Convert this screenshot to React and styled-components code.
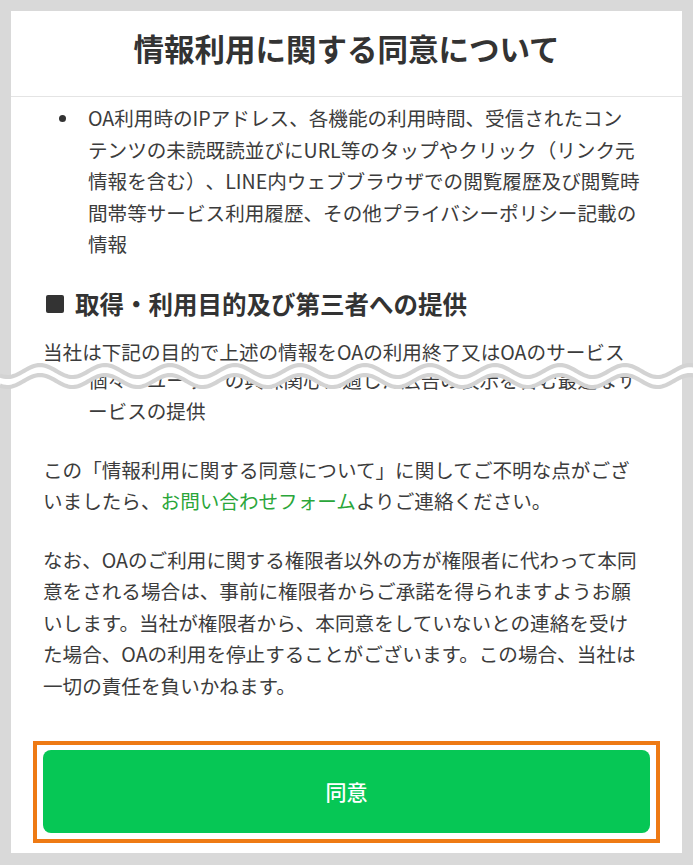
import React from 'react';
import styled, { createGlobalStyle } from 'styled-components';

const GlobalStyle = createGlobalStyle`
  body {
    margin: 0;
    background-color: #d9d9d9;
    font-family: 'Noto Sans CJK JP', 'Noto Sans', sans-serif;
  }
`;

// wavy "torn" splice between two screenshots
const WAVE_TOP = 362;
const WAVE_HEIGHT = 32;
const upper = (x) => 371 - 6 * Math.cos((2 * Math.PI * (x - 40)) / 65);
const lower = (x) => upper(x) + 10;

const curve = (fn, from, to, move = true) => {
  const pts = [];
  const step = from < to ? 2 : -2;
  for (let x = from; step > 0 ? x <= to : x >= to; x += step) {
    pts.push(`${x},${fn(x).toFixed(2)}`);
  }
  return (move ? 'M' : 'L') + pts.join(' L');
};

const Tear = () => {
  const cover = `M11,${WAVE_TOP} L682,${WAVE_TOP} ${curve(lower, 682, 11, false)} Z`;
  const band = `${curve(upper, 0, 694)} ${curve(lower, 694, 0, false)} Z`;
  return (
    <TearSvg viewBox={`0 ${WAVE_TOP} 693 ${WAVE_HEIGHT}`}>
      <path d={cover} fill="#ffffff" />
      <path d={band} fill="#ffffff" />
      <path d={curve(upper, 0, 694)} fill="none" stroke="#d3d3d3" strokeWidth="4.2" />
      <path d={curve(lower, 0, 694)} fill="none" stroke="#d3d3d3" strokeWidth="4.2" />
    </TearSvg>
  );
};

const App = () => {
  return (
    <>
      <GlobalStyle />
      <Page>
        <Card>
          <Header>
            <Title>情報利用に関する同意について</Title>
          </Header>
          <Body>
            <BulletList>
              <Item>
                OA利用時のIPアドレス、各機能の利用時間、受信されたコン
                <br />
                テンツの未読既読並びにURL等のタップやクリック（リンク元
                <br />
                情報を含む）、LINE内ウェブブラウザでの閲覧履歴及び閲覧時
                <br />
                間帯等サービス利用履歴、その他プライバシーポリシー記載の
                <br />
                情報
              </Item>
            </BulletList>

            <SectionTitle>取得・利用目的及び第三者への提供</SectionTitle>
            <Text>当社は下記の目的で上述の情報をOAの利用終了又はOAのサービス</Text>

            <BulletList $spliced>
              <Item>
                個々のユーザーの興味関心に適した広告の表示を含む最適なサ
                <br />
                ービスの提供
              </Item>
            </BulletList>

            <Text $gap>
              この「情報利用に関する同意について」に関してご不明な点がござ
              <br />
              いましたら、<Link href="#">お問い合わせフォーム</Link>よりご連絡ください。
            </Text>

            <Text $gap>
              なお、OAのご利用に関する権限者以外の方が権限者に代わって本同
              <br />
              意をされる場合は、事前に権限者からご承諾を得られますようお願
              <br />
              いします。当社が権限者から、本同意をしていないとの連絡を受け
              <br />
              た場合、OAの利用を停止することがございます。この場合、当社は
              <br />
              一切の責任を負いかねます。
            </Text>

            <ButtonFrame>
              <AgreeButton type="button">同意</AgreeButton>
            </ButtonFrame>
          </Body>
        </Card>
        <Tear />
      </Page>
    </>
  );
};

export default App;

const Page = styled.div`
  position: relative;
  padding: 11px 11px 12px;
`;

const Card = styled.div`
  display: flex;
  flex-direction: column;
  background-color: #ffffff;
`;

const Header = styled.header`
  padding: 15.5px 20px 27.5px;
  border-bottom: 1.5px solid #e4e4e4;
  text-align: center;
`;

const Title = styled.h1`
  margin: 0;
  color: #333333;
  font-size: 30.5px;
  font-weight: 700;
  line-height: 42px;
`;

const Body = styled.main`
  display: flex;
  flex-direction: column;
  padding: 5px 32px 10px;
  color: #3c3c3c;
  font-size: 19.6px;
  line-height: 31.5px;
  text-spacing-trim: space-all;
`;

const BulletList = styled.ul`
  margin: ${(p) => (p.$spliced ? '-3.5px' : '0')} 0 0;
  padding: 0 0 0 45px;
  list-style: none;
`;

const Item = styled.li`
  position: relative;
  white-space: nowrap;

  &::before {
    content: '';
    position: absolute;
    left: -29px;
    top: 12.5px;
    width: 7px;
    height: 7px;
    border-radius: 50%;
    background-color: #333333;
  }
`;

const SectionTitle = styled.h2`
  display: flex;
  align-items: center;
  gap: 11px;
  margin: 26px 0 14px;
  padding-left: 3px;
  color: #333333;
  font-size: 24.5px;
  font-weight: 700;
  line-height: 36px;

  &::before {
    content: '';
    width: 18px;
    height: 18px;
    border-radius: 2px;
    background-color: #333333;
  }
`;

const Text = styled.p`
  margin: ${(p) => (p.$gap ? '27px' : '0')} 0 0;
  white-space: nowrap;
`;

const Link = styled.a`
  color: #2aa63a;
  text-decoration: none;
`;

const ButtonFrame = styled.div`
  display: flex;
  margin: 39.5px -10px 0;
  padding: 5px 6px 6px;
  border: 4px solid #ee7a14;
`;

const AgreeButton = styled.button`
  flex: 1;
  height: 83px;
  border: none;
  border-radius: 8px;
  background-color: #06c755;
  color: #ffffff;
  font-family: inherit;
  font-size: 21px;
  font-weight: 500;
  cursor: pointer;
`;

const TearSvg = styled.svg`
  position: absolute;
  top: ${WAVE_TOP}px;
  left: 0;
  width: 693px;
  height: ${WAVE_HEIGHT}px;
  pointer-events: none;
`;
